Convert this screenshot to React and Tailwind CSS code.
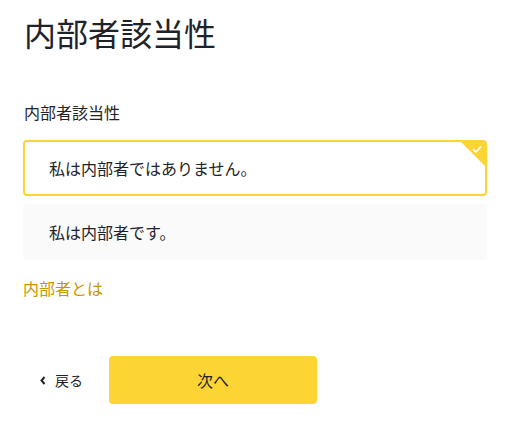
const FONT = "font-['Noto_Sans_CJK_JP','Noto_Sans',sans-serif]";

function Check() {
  return (
    <svg width="10" height="8" viewBox="0 0 10 8" fill="none">
      <path d="M1 4.2L3.8 7L9 1.5" stroke="white" strokeWidth="1.8" />
    </svg>
  );
}

export default function App() {
  return (
    <main className={`${FONT} bg-white text-[#1e2329] w-[508px] h-[427px] pl-[23px] pt-3`}>
      {/* Title */}
      <h1 className="text-[32px] leading-[40px] font-normal pl-[1px]">内部者該当性</h1>

      {/* Question */}
      <div className="mt-12 w-[464px]">
        <p className="text-[16px] leading-6 pl-[1px]">内部者該当性</p>

        <div className="mt-4 flex flex-col gap-2">
          <div className="relative h-14 flex items-center pl-[24px] border-2 border-[#fcd535] rounded-[4px] overflow-hidden bg-white">
            <span className="text-[16px]">私は内部者ではありません。</span>
            <div className="absolute top-0 right-0 w-6 h-6 bg-[#fcd535] [clip-path:polygon(0_0,100%_0,100%_100%)]">
              <div className="absolute top-[3px] right-[3px]">
                <Check />
              </div>
            </div>
          </div>

          <div className="h-14 flex items-center pl-[26px] bg-[#fafafa] rounded-[4px]">
            <span className="text-[16px]">私は内部者です。</span>
          </div>
        </div>

        <a href="#" className="block mt-4 text-[16px] leading-6 text-[#c99400]">内部者とは</a>
      </div>

      {/* Actions */}
      <div className="mt-14 flex items-center">
        <button className="flex items-center gap-[9px] pl-[17px] w-[86px] h-12 text-[14px]">
          <svg width="6" height="9" viewBox="0 0 6 9" fill="none">
            <path d="M4.5 1L1.5 4.5L4.5 8" stroke="#1e2329" strokeWidth="2" />
          </svg>
          戻る
        </button>
        <button className="w-[208px] h-12 bg-[#fcd535] rounded-[4px] text-[16px]">次へ</button>
      </div>
    </main>
  );
}
